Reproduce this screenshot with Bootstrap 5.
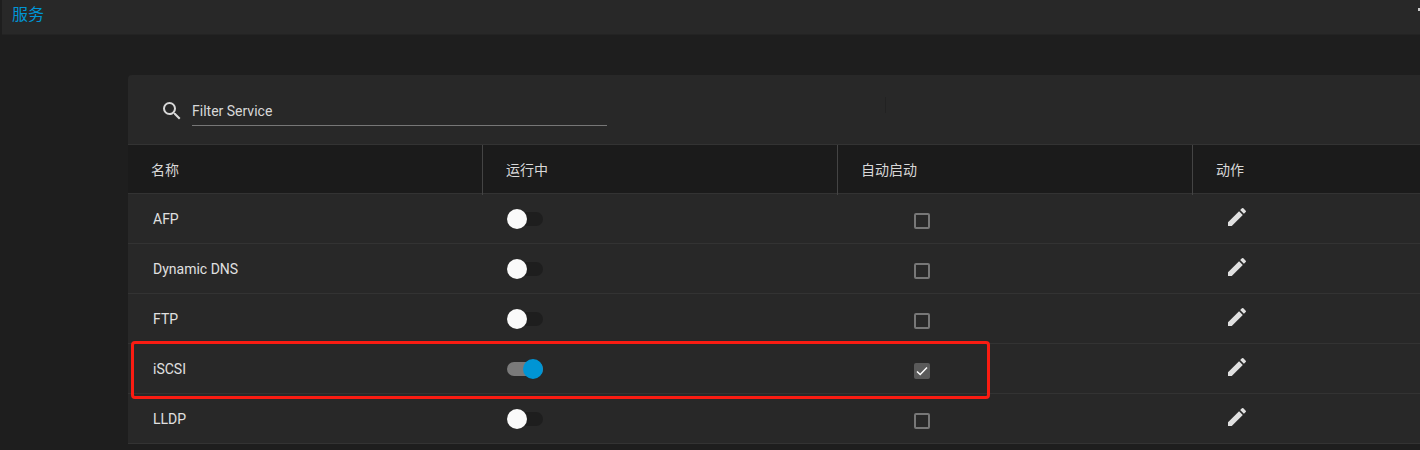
<!DOCTYPE html>
<html lang="zh">
<head>
    <meta charset="UTF-8" />
    <meta name="viewport" content="width=device-width, initial-scale=1" />
    <title>服务</title>
    <link href="https://cdn.jsdelivr.net/npm/bootstrap@5.3.2/dist/css/bootstrap.min.css" rel="stylesheet" />
    <style>
        body {
            background: #1e1e1e;
            color: #e0e0e0;
            font-family: Roboto, "Noto Sans CJK SC", sans-serif;
            font-size: 14px;
            height: 450px;
            overflow: hidden;
            position: relative;
        }
        .page-head {
            height: 35px;
            margin-left: 2px;
            padding-left: 10px;
            background: #282828;
            border-bottom: 1px solid #232323;
            color: #0095d5;
            font-size: 16px;
            line-height: 30px;
        }
        .svc-panel {
            width: 1292px;
            margin: 40px 0 0 128px;
            background: #282828;
            border-radius: 4px 0 0 0;
        }
        .svc-filter {
            height: 69px;
            padding: 20px 0 0 32px;
            gap: 8px;
        }
        .svc-filter-text {
            width: 415px;
            height: 31px;
            line-height: 33px;
            border-bottom: 1px solid #777;
            color: #d8d8d8;
        }
        .svc-cols {
            display: grid;
            grid-template-columns: repeat(3, 355px) 1fr;
        }
        .svc-head {
            height: 50px;
            background: #1b1b1b;
            border-top: 1px solid #333;
            border-bottom: 1px solid #333;
            color: #d8d8d8;
        }
        .svc-head > div {
            padding-left: 23px;
            line-height: 50px;
            border-right: 1px solid #444;
        }
        .svc-head > div:last-child { border-right: 0; }
        .svc-row {
            height: 50px;
            border-bottom: 1px solid #333;
            align-items: center;
        }
        .svc-row > div { padding-left: 24px; }
        .svc-row > .svc-name { padding: 2px 0 0 25px; }
        .svc-switch {
            display: block;
            position: relative;
            width: 36px;
            height: 14px;
            border-radius: 7px;
            background: #1e1e1e;
        }
        .svc-switch::after {
            content: "";
            position: absolute;
            left: 0;
            top: -3px;
            width: 20px;
            height: 20px;
            border-radius: 50%;
            background: #fafafa;
        }
        .svc-switch.is-on { background: #7a7a7a; }
        .svc-switch.is-on::after { left: 16px; background: #0095d5; }
        .svc-check {
            display: block;
            width: 16px;
            height: 16px;
            margin: 5px 0 0 52px;
            border: 2px solid #777;
            border-radius: 2px;
        }
        .svc-check.is-on {
            background: #5a5a5a;
            border: 0;
        }
        .svc-check svg { display: block; }
        .svc-edit { display: block; margin: -4px 0 0 8px; }
        .svc-mark {
            position: absolute;
            left: 131px;
            top: 341px;
            width: 859px;
            height: 58px;
            border: 3px solid #fa1c12;
            border-radius: 4px;
        }
        .svc-tick {
            position: absolute;
            left: 885px;
            top: 97px;
            width: 1px;
            height: 16px;
            background: #222;
        }
        .head-close {
            position: absolute;
            right: 0;
            top: 8px;
            width: 2px;
            height: 3px;
            background: #ccc;
        }
    </style>
</head>
<body>
<div class="page-head">服务</div>
<span class="head-close"></span>

<div class="svc-panel">
    <div class="svc-filter d-flex align-items-start">
        <svg width="24" height="24" viewBox="0 0 24 24" fill="#d8d8d8" class="mt-1"><path d="M15.5 14h-.79l-.28-.27A6.47 6.47 0 0 0 16 9.5 6.5 6.5 0 1 0 9.5 16c1.61 0 3.09-.59 4.23-1.57l.27.28v.79l5 4.99L20.49 19l-4.99-5zm-6 0C7.01 14 5 11.99 5 9.5S7.01 5 9.5 5 14 7.01 14 9.5 11.99 14 9.5 14z"/></svg>
        <div class="svc-filter-text">Filter Service</div>
    </div>

    <div class="svc-cols svc-head">
        <div>名称</div>
        <div>运行中</div>
        <div>自动启动</div>
        <div>动作</div>
    </div>

    <div id="svc-rows"></div>
</div>

<span class="svc-tick"></span>
<div class="svc-mark"></div>

<script>
    const services = [
        { name: 'AFP', on: false },
        { name: 'Dynamic DNS', on: false },
        { name: 'FTP', on: false },
        { name: 'iSCSI', on: true },
        { name: 'LLDP', on: false }
    ];
    const tick = '<svg width="16" height="16" viewBox="0 0 16 16"><path d="M3 8.5l3.2 3 6.8-7" fill="none" stroke="#fff" stroke-width="1.5"/></svg>';
    const pencil = '<svg class="svc-edit" width="24" height="24" viewBox="0 0 24 24" fill="#e0e0e0"><path d="M3 17.25V21h3.75L17.81 9.94l-3.75-3.75L3 17.25zM20.71 7.04a1 1 0 0 0 0-1.41l-2.34-2.34a1 1 0 0 0-1.41 0l-1.83 1.83 3.75 3.75 1.83-1.83z"/></svg>';

    document.getElementById('svc-rows').innerHTML = services.map(({ name, on }) => `
        <div class="svc-cols svc-row">
            <div class="svc-name">${name}</div>
            <div><span class="svc-switch ${on ? 'is-on' : ''}"></span></div>
            <div><span class="svc-check ${on ? 'is-on' : ''}">${on ? tick : ''}</span></div>
            <div>${pencil}</div>
        </div>
    `).join('');
</script>
<script src="https://cdn.jsdelivr.net/npm/bootstrap@5.3.2/dist/js/bootstrap.bundle.min.js"></script>
</body>
</html>
